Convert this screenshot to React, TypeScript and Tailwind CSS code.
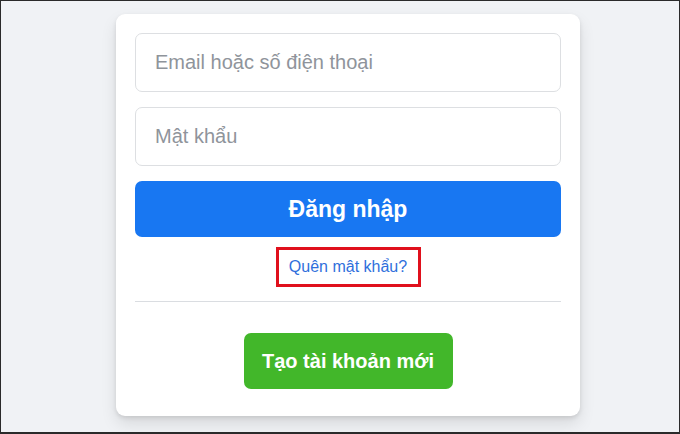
import React from "react";

export default function App() {
  return (
    <div
      className="w-[680px] h-[434px] bg-[#f0f2f5] border border-b-2 border-[#2a2a2a] overflow-hidden"
      style={{ fontFamily: '"Liberation Sans", Arial, sans-serif' }}
    >
      <div className="ml-[115px] mt-[13px] w-[464px] h-[402px] bg-white rounded-[9px] shadow-[0_2px_4px_rgba(0,0,0,0.1),0_8px_16px_rgba(0,0,0,0.1)] p-[19px] pb-[27px] flex flex-col items-center">
        <input
          className="w-full h-[59px] border border-[#dddfe2] rounded-[7px] px-[19px] text-[20px] text-[#1c1e21] placeholder:text-[#8f949b] outline-none"
          placeholder="Email hoặc số điện thoại"
        />
        <input
          type="password"
          className="w-full h-[59px] mt-[15px] border border-[#dddfe2] rounded-[7px] px-[19px] text-[20px] text-[#1c1e21] placeholder:text-[#8f949b] outline-none"
          placeholder="Mật khẩu"
        />
        <button className="w-full h-[56px] mt-[15px] bg-[#1877f2] rounded-[7px] text-white font-bold text-[23px] leading-none">
          Đăng nhập
        </button>
        <div className="mt-[10px] w-[145px] h-[40px] border-[3px] border-[#e0101c] flex items-center justify-center">
          <a className="text-[16px] text-[#2f6fdc] leading-none">Quên mật khẩu?</a>
        </div>
        <div className="mt-[14px] w-full h-px bg-[#dadde1]" />
        <button className="mt-[31px] w-[209px] h-[56px] bg-[#42b72a] rounded-[7px] text-white font-bold text-[20px] leading-none">
          Tạo tài khoản mới
        </button>
      </div>
    </div>
  );
}
